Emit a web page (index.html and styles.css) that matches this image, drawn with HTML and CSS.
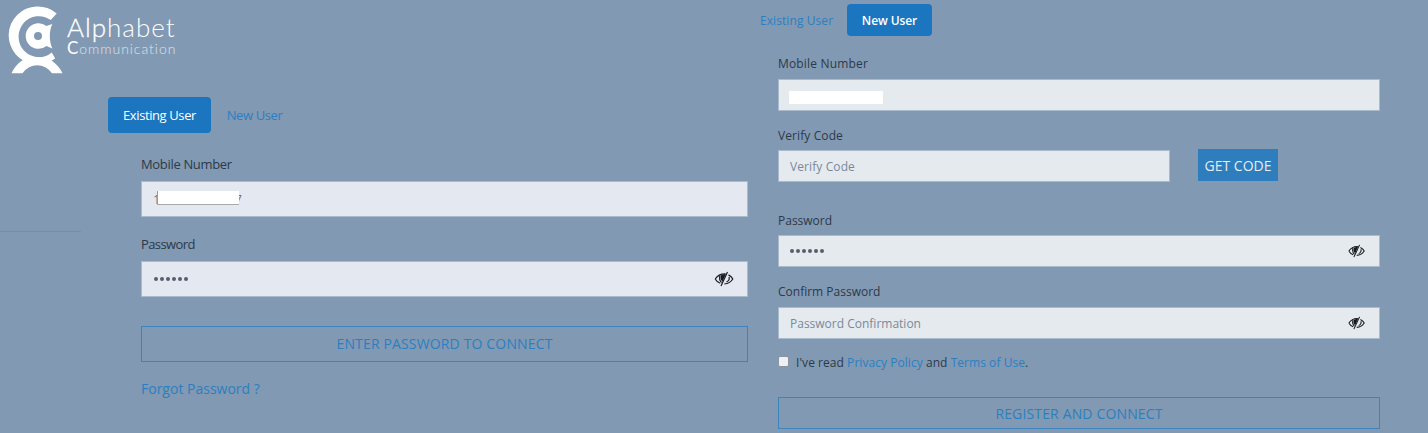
FILE: index.html
```
<!DOCTYPE html>
<html lang="en">
<head>
<meta charset="utf-8">
<title>Alphabet Communication</title>
<link rel="stylesheet" href="styles.css">
</head>
<body>
<svg class="defs" width="0" height="0" aria-hidden="true">
  <symbol id="eye-off" viewBox="0 0 20 16">
    <path d="M1.200 8C4 3.800 7.500 2.600 11.500 2.800M1.200 8c1.400 2.400 3 3.700 5 4.300M14.500 3.900C16.500 4.900 18 6.200 18.800 8c-2 3.200-5 4.800-8.500 5M15 6c.7 2-.5 4-2.500 5" fill="none" stroke="currentColor" stroke-width="1.200"/>
    <path d="M13.500 1L7 15M6 4.500C5 7.500 5.500 9.500 7.500 11.500" fill="none" stroke="currentColor" stroke-width="1.200"/>
    <path d="M7 4.200l5-1.500L8.500 10.500C6.500 9 6 7 7 4.200z" fill="currentColor"/>
  </symbol>
</svg>
<main class="page">
  <section class="login">
    <header class="brand">
      <svg class="mark" width="56" height="68" viewBox="8 6 56 68">
        <path d="M56.700 13.500A29 29 0 1 0 55.200 58.500L51.800 52.500A20.300 20.500 0 1 1 50.700 20z" fill="#fff"/>
        <path fill-rule="evenodd" d="M52.300 24C49 31 49 41 52.300 48.500L46.500 46A12.800 12.800 0 1 1 46.500 26zM38 32a4 4 0 1 0 0 8a4 4 0 1 0 0-8z" fill="#fff"/>
        <path d="M11.500 73.200C14 68 17 64 22 60.500L38 57L51.500 60.500C56.500 64 60 68 62.500 73.200H52C44.500 62.500 30 62.500 22.500 73.200z" fill="#fff"/>
      </svg>
      <div class="brand-text">
        <div class="brand-name"><b>Alp</b>habet</div>
        <div class="brand-sub"><b>C</b>ommunication</div>
      </div>
    </header>
    <div class="login-body">
      <aside class="rail"></aside>
      <div class="login-main">
        <nav class="tabs"><a class="tab active"><span class="t-exist">Existing User</span></a><a class="tab"><span class="t-new">New User</span></a></nav>
        <form class="form">
          <label class="label"><span class="t-mobile">Mobile Number</span></label>
          <div class="field"><span class="digit">1</span><span class="mask"></span><span class="digit last">7</span></div>
          <label class="label second"><span class="t-pass">Password</span></label>
          <div class="field"><span class="dots"><i></i><i></i><i></i><i></i><i></i><i></i></span><svg class="eye"><use href="#eye-off"/></svg></div>
          <div class="outline-btn"><span class="t-enter">ENTER PASSWORD TO CONNECT</span></div>
          <a class="forgot"><span class="t-forgot">Forgot Password ?</span></a>
        </form>
      </div>
    </div>
  </section>
  <section class="register">
    <nav class="tabs"><a class="tab"><span class="r-exist">Existing User</span></a><a class="tab active"><span class="r-new">New User</span></a></nav>
    <form class="form">
      <label class="label"><span class="r-mobile">Mobile Number</span></label>
      <div class="field"><span class="mask"></span></div>
      <label class="label"><span class="r-verify">Verify Code</span></label>
      <div class="code-row"><div class="field"><span class="hint r-hint">Verify Code</span></div><div class="get-code"><span class="r-get">GET CODE</span></div></div>
      <label class="label wide"><span class="r-pass">Password</span></label>
      <div class="field"><span class="dots"><i></i><i></i><i></i><i></i><i></i><i></i></span><svg class="eye"><use href="#eye-off"/></svg></div>
      <label class="label"><span class="r-confirm">Confirm Password</span></label>
      <div class="field"><span class="hint r-conf-hint">Password Confirmation</span><svg class="eye"><use href="#eye-off"/></svg></div>
      <div class="terms"><span class="check"></span><span class="r-terms">I've read <a>Privacy Policy</a> and <a>Terms of Use</a>.</span></div>
      <div class="outline-btn"><span class="r-reg">REGISTER AND CONNECT</span></div>
    </form>
  </section>
</main>
</body>
</html>
```
FILE: styles.css
```
* { box-sizing: border-box; }
body { margin: 0; background: #8299b3; font-family: "Open Sans", "Noto Sans", sans-serif; color: #2b3a49; }
.defs { display: block; height: 0; }
.page { display: grid; grid-template-columns: 748px 1fr; width: 1428px; height: 433px; overflow: hidden; }
span { white-space: nowrap; }
.brand { display: flex; height: 97px; padding: 6px 0 0 8px; }
.brand-text { padding: 6px 0 0 3px; color: #fff; font-family: Lato, sans-serif; font-weight: 300; }
.brand-text b { font-weight: 400; }
.brand-name { font-size: 26px; line-height: 30px; width: max-content; letter-spacing: 1px; }
.brand-name b { font-weight: 300; -webkit-text-stroke: .3px #fff; }
.brand-sub { font-size: 14px; line-height: 11px; width: max-content; color: #dde4ec; letter-spacing: .95px; }
.brand-sub b { font-size: 17px; color: #fff; }
.login-body { display: flex; }
.rail { width: 81px; height: 135px; border-bottom: 1px solid #768ead; }
.login-main { flex: 1; padding-left: 27px; }
.tabs { display: flex; font-size: 13px; color: #2b7fc1; }
.tab { display: flex; align-items: center; justify-content: center; height: 36px; width: 87px; }
.tab.active { width: 103px; background: #1b75bf; color: #fff; border-radius: 4px; }
.login .tab span { letter-spacing: -.4px; }
.t-mobile { letter-spacing: -.33px; }
.t-pass { letter-spacing: -.6px; }
.t-enter { letter-spacing: .15px; }
.login .form { padding-left: 33px; }
.label { display: flex; align-items: center; font-size: 13px; }
.login .label { height: 48px; padding-top: 14px; }
.login .label.second { height: 44px; padding-top: 10px; }
.field { display: flex; align-items: center; border: 1px solid #a9bacd; }
.login .field { height: 36px; background: #e4e8f1; padding: 0 13px 0 11px; }
.login .field:has(.dots) { padding-left: 12px; }
.digit { font-size: 13px; width: 4px; overflow: hidden; color: #6b7581; }
.digit.last { width: 3px; direction: rtl; }
.mask { background: #fff; }
.login .mask { width: 82px; height: 14px; margin-bottom: 2px; border-left: 1px solid #999; border-bottom: 1px solid #aaa; }
.dots { display: flex; gap: 2px; flex: 1; }
.dots i { width: 4px; height: 4px; border-radius: 50%; background: #555f6c; }
.eye { width: 20px; height: 16px; color: #161a20; margin-left: auto; }
.outline-btn { display: flex; align-items: center; justify-content: center; border: 1px solid #3d85bf; color: #2b7fc1; }
.login .outline-btn { height: 36px; margin-top: 29px; font-size: 14px; padding-bottom: 1px; }
.forgot { display: flex; align-items: center; height: 52px; font-size: 14px; color: #2b7fc1; }

.register { padding: 4px 48px 0 12px; }
.register .tabs { height: 32px; font-size: 12px; }
.register .tab { height: 32px; width: 85px; }
.register .tab:first-child { width: 87px; justify-content: flex-start; }
.r-exist { letter-spacing: .08px; }
.r-new { letter-spacing: -.1px; }
.register .tab.active { font-weight: 600; }
.register .form { padding-left: 18px; }
.register .label { height: 40px; padding-top: 9px; font-size: 12px; }
.register .tabs + .form .label:first-child { height: 43px; padding-top: 12px; }
.r-mobile { letter-spacing: .17px; }
.r-verify { letter-spacing: .1px; }
.register .field { height: 32px; padding: 0 13px 0 10px; background: #e5eaef; }
.register .mask { width: 94px; height: 13px; margin-top: 4px; }
.hint { color: #79899a; font-size: 12px; padding-left: 1px; }
.r-hint { letter-spacing: .1px; padding-top: 1px; }
.code-row { display: flex; gap: 28px; height: 32px; margin-top: -1px; margin-bottom: 6px; }
.code-row .field { width: 392px; }
.get-code { display: flex; align-items: center; justify-content: center; width: 80px; height: 32px; margin-top: -1px; background: #2e7dbd; color: #e3edf7; font-size: 14px; }
.register .label.wide { height: 47px; padding-top: 17px; }
.register .dots { padding-left: 1px; }
.register .eye { width: 19px; height: 14px; }
.terms { display: flex; align-items: center; gap: 7px; height: 46px; font-size: 12px; }
.terms a { color: #2b7fc1; }
.r-terms { letter-spacing: .05px; }
.check { width: 11px; height: 11px; margin-top: -1px; background: #edf1f5; border: 1px solid #8b949e; border-radius: 2px; }
.register .outline-btn { height: 32px; margin-top: 12px; font-size: 14px; letter-spacing: .15px; }
```
